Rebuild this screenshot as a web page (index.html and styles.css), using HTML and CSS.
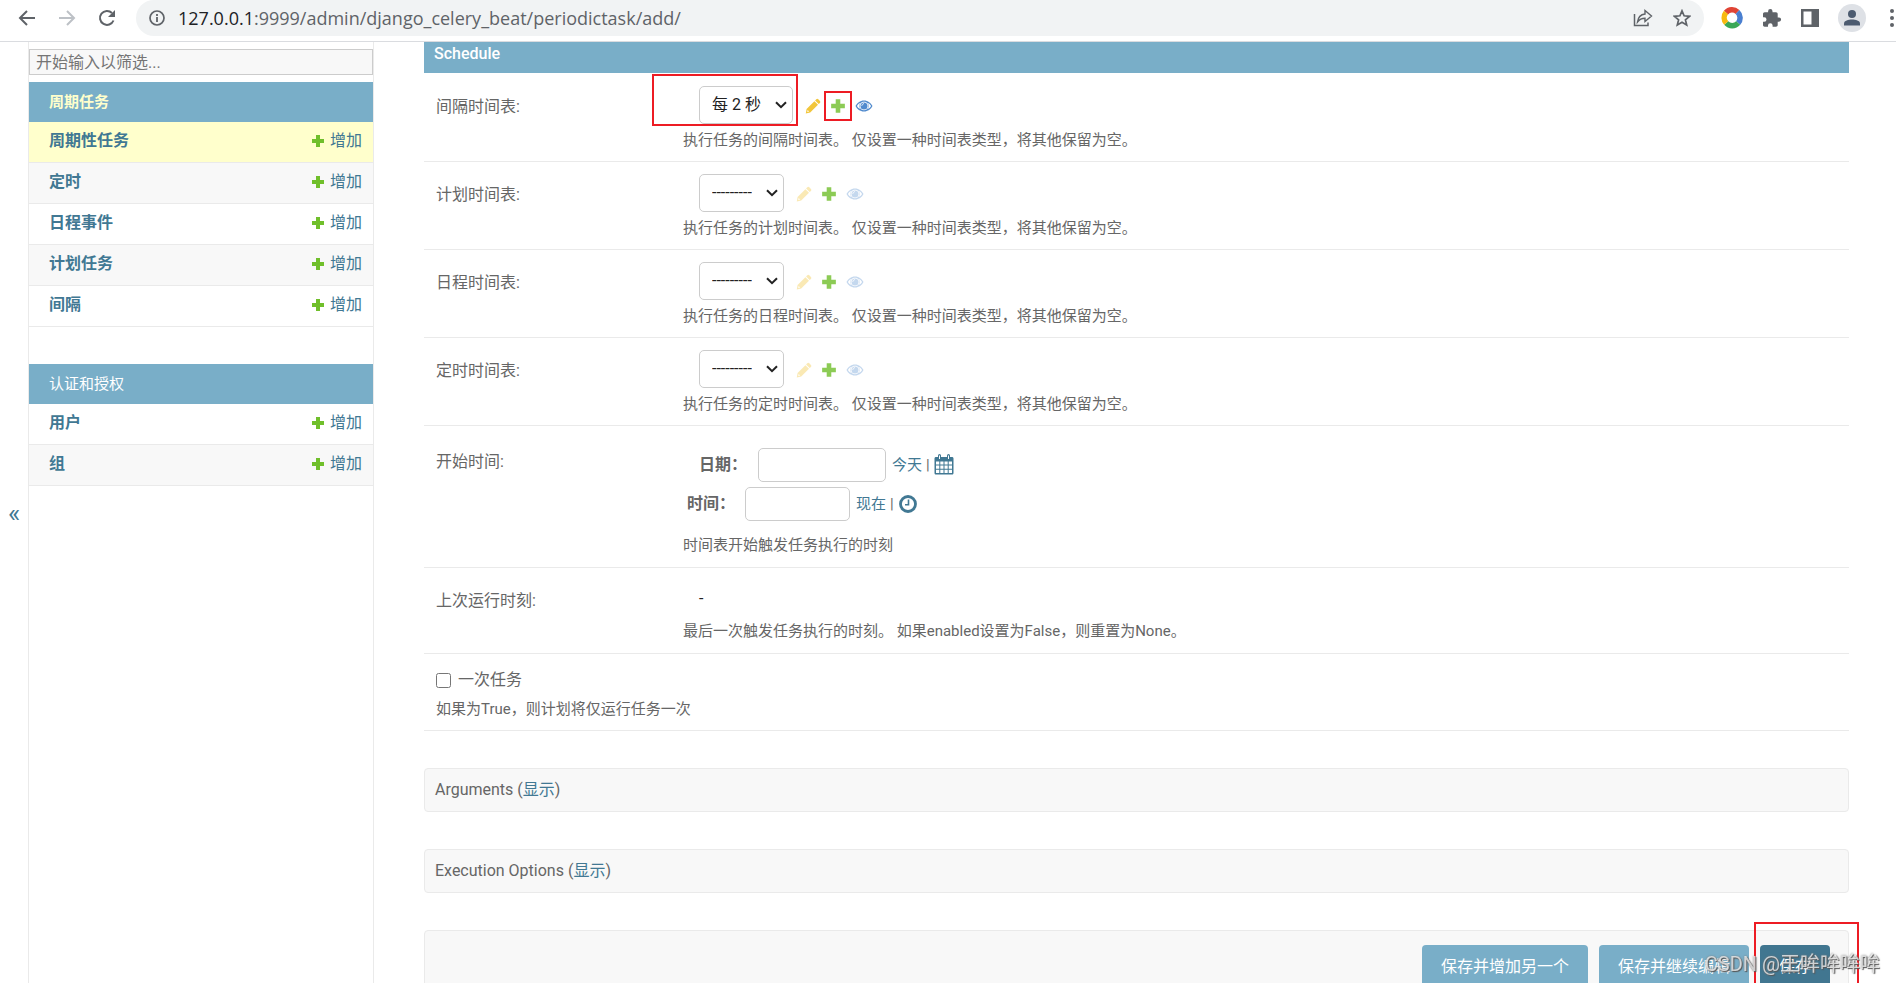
FILE: index.html
```html
<!DOCTYPE html>
<html lang="zh-CN">
<head>
<meta charset="utf-8">
<title>增加 周期性任务</title>
<link rel="stylesheet" href="styles.css">
</head>
<body>
<svg class="defs" aria-hidden="true">
  <symbol id="plus" viewBox="0 0 14 14"><path d="M5 1h4v4h4v4H9v4H5V9H1V5h4z" fill="currentColor"/></symbol>
  <symbol id="pencil" viewBox="0 0 16 16"><path d="M11.300 1.300a1.400 1.400 0 0 1 2 0l1.600 1.600a1.400 1.400 0 0 1 0 2l-1.200 1.200-3.600-3.600zM9.400 3.200l3.600 3.600-7.800 7.800L.8 15.400l.8-4.400zM2.600 11.900l-.4 2 2-.4z" fill="currentColor" fill-rule="evenodd"/></symbol>
  <symbol id="eye" viewBox="0 0 18 12"><path d="M9 .5C5 .5 2 3 .5 6 2 9 5 11.500 9 11.500S16 9 17.500 6C16 3 13 .5 9 .5zM9 1.700c.7 0 1.200.2 1.800.4A4.300 4.300 0 0 1 11.600 9.600c-.8.500-1.700.7-2.600.7s-1.800-.2-2.600-.7A4.300 4.300 0 0 1 7.200 2.100C7.800 1.900 8.300 1.700 9 1.700zM5 2.900A6 6 0 0 0 5 9C3.600 8.300 2.600 7.300 1.900 6 2.600 4.700 3.600 3.600 5 2.900zM13 2.900c1.400.7 2.400 1.800 3.100 3.100-.7 1.300-1.700 2.300-3.100 3A6 6 0 0 0 13 2.900z" fill="currentColor" fill-rule="evenodd"/><path d="M9 2.500A3.500 3.500 0 1 0 9 9.500 3.500 3.500 0 0 0 9 2.500z" fill="currentColor"/><path d="M6.800 5.800C6.900 4.600 7.800 3.700 9 3.600" fill="none" stroke="#fff" stroke-width=".9"/></symbol>
  <symbol id="chevron" viewBox="0 0 12 8"><path d="M1 1.200l5 5 5-5" fill="none" stroke="#222" stroke-width="2"/></symbol>
</svg>

<header class="toolbar">
  <button class="tool nav-btn" aria-label="后退"><svg width="18" height="18" viewBox="0 0 18 18"><path d="M17 9H2M9 2L2 9l7 7" fill="none" stroke="#5f6368" stroke-width="2"/></svg></button>
  <button class="tool nav-btn" aria-label="前进"><svg width="18" height="18" viewBox="0 0 18 18"><path d="M1 9h15M9 2l7 7-7 7" fill="none" stroke="#bdc1c6" stroke-width="2"/></svg></button>
  <button class="tool nav-btn" aria-label="刷新"><svg width="18" height="18" viewBox="0 0 18 18"><path d="M15.500 11.500A7 7 0 1 1 14 4" fill="none" stroke="#5f6368" stroke-width="2"/><path d="M17 1v7h-7z" fill="#5f6368"/></svg></button>
  <div class="address">
    <svg width="16" height="16" viewBox="0 0 16 16"><circle cx="8" cy="8" r="7" fill="none" stroke="#5f6368" stroke-width="1.700"/><path d="M8 7v5M8 4v2" stroke="#5f6368" stroke-width="1.800"/></svg>
    <span class="url"><b>127.0.0.1</b>:9999/admin/django_celery_beat/periodictask/add/</span>
    <button class="tool" aria-label="分享"><svg width="20" height="18" viewBox="0 0 20 18"><path d="M1.500 5v11.500h13.500v-3" fill="none" stroke="#5f6368" stroke-width="1.500"/><path d="M12 1.500l6.500 5.500-6.500 5.500V9.300c-3 0-5.500 1-7.500 3.700.5-4 3-7.500 7.500-8z" fill="none" stroke="#5f6368" stroke-width="1.400"/></svg></button>
    <button class="tool" aria-label="收藏"><svg width="18" height="18" viewBox="0 0 18 18"><path d="M9 1.800l2.100 5 5.400.5-4.100 3.500 1.300 5.300L9 13.300l-4.700 2.800 1.300-5.300-4.100-3.500 5.400-.5z" fill="none" stroke="#5f6368" stroke-width="1.700"/></svg></button>
  </div>
  <div class="extensions">
    <button class="tool" aria-label="扩展"><svg width="22" height="22" viewBox="0 0 22 22"><g fill="none" stroke-width="5.500"><path d="M5 5.600A8 8 0 0 1 16.500 5" stroke="#e04435"/><path d="M16.500 5a8 8 0 0 1 .7 11" stroke="#4a7fd0"/><path d="M17.200 16a8 8 0 0 1-12 0" stroke="#3aa757"/><path d="M5.200 16A8 8 0 0 1 5 5.600" stroke="#f7b90f"/></g></svg></button>
    <button class="tool" aria-label="扩展程序"><svg width="20" height="20" viewBox="0 0 20 20"><path d="M17 9.500h-1.300V6c0-1-.7-1.700-1.700-1.700h-3.500V3.200a2.200 2.200 0 0 0-4.400 0v1.100H2.700C1.700 4.300 1 5 1 6v3.200h1.200a2.300 2.300 0 0 1 0 4.600H1V17c0 1 .7 1.700 1.700 1.700H6v-1.200a2.300 2.300 0 0 1 4.600 0v1.200H14c1 0 1.700-.7 1.700-1.700v-3.300H17a2.100 2.100 0 0 0 0-4.200z" fill="#5f6368"/></svg></button>
    <button class="tool" aria-label="侧边栏"><svg width="18" height="18" viewBox="0 0 18 18"><path d="M0 0h18v18H0zM2.500 2.500v13h8v-13z" fill="#5f6368" fill-rule="evenodd"/></svg></button>
    <button class="tool avatar" aria-label="用户"><svg width="28" height="28" viewBox="0 0 28 28"><circle cx="14" cy="14" r="14" fill="#dee1e6"/><circle cx="14" cy="10" r="4" fill="#4c5b70"/><path d="M6 21.500v-2c0-3 4.500-4 8-4s8 1 8 4v2z" fill="#4c5b70"/></svg></button>
    <button class="tool" aria-label="菜单"><svg width="4" height="18" viewBox="0 0 4 18"><g fill="#5f6368"><circle cx="2" cy="2" r="2"/><circle cx="2" cy="9" r="2"/><circle cx="2" cy="16" r="2"/></g></svg></button>
  </div>
</header>

<div class="page">
  <button class="toggle" aria-label="切换侧边栏">«</button>
  <nav class="sidebar">
    <input class="filter" type="search" placeholder="开始输入以筛选..." aria-label="筛选">
    <table class="module">
      <caption><a class="current-app" href="#">周期任务</a></caption>
      <tr class="current"><th><a href="#">周期性任务</a></th><td><a href="#"><svg class="plus"><use href="#plus"/></svg>增加</a></td></tr>
      <tr><th><a href="#">定时</a></th><td><a href="#"><svg class="plus"><use href="#plus"/></svg>增加</a></td></tr>
      <tr><th><a href="#">日程事件</a></th><td><a href="#"><svg class="plus"><use href="#plus"/></svg>增加</a></td></tr>
      <tr><th><a href="#">计划任务</a></th><td><a href="#"><svg class="plus"><use href="#plus"/></svg>增加</a></td></tr>
      <tr><th><a href="#">间隔</a></th><td><a href="#"><svg class="plus"><use href="#plus"/></svg>增加</a></td></tr>
    </table>
    <table class="module">
      <caption><a href="#">认证和授权</a></caption>
      <tr><th><a href="#">用户</a></th><td><a href="#"><svg class="plus"><use href="#plus"/></svg>增加</a></td></tr>
      <tr><th><a href="#">组</a></th><td><a href="#"><svg class="plus"><use href="#plus"/></svg>增加</a></td></tr>
    </table>
  </nav>

  <main class="content">
    <form>
      <section class="fieldset">
        <h2>Schedule</h2>
        <div class="row">
          <label class="name" for="interval">间隔时间表:</label>
          <div class="field">
            <div class="related">
              <span class="select-wrap marked"><select id="interval"><option>每 2 秒</option></select><svg class="chevron"><use href="#chevron"/></svg></span>
              <a href="#" class="change" aria-label="修改"><svg><use href="#pencil"/></svg></a>
              <a href="#" class="add marked" aria-label="增加"><svg><use href="#plus"/></svg></a>
              <a href="#" class="view" aria-label="查看"><svg><use href="#eye"/></svg></a>
            </div>
            <p class="help">执行任务的间隔时间表。 仅设置一种时间表类型，将其他保留为空。</p>
          </div>
        </div>
        <div class="row">
          <label class="name" for="crontab">计划时间表:</label>
          <div class="field">
            <div class="related empty">
              <span class="select-wrap"><select id="crontab"><option>---------</option></select><svg class="chevron"><use href="#chevron"/></svg></span>
              <a class="change" href="#" aria-label="修改"><svg><use href="#pencil"/></svg></a>
              <a href="#" class="add" aria-label="增加"><svg><use href="#plus"/></svg></a>
              <a class="view" href="#" aria-label="查看"><svg><use href="#eye"/></svg></a>
            </div>
            <p class="help">执行任务的计划时间表。 仅设置一种时间表类型，将其他保留为空。</p>
          </div>
        </div>
        <div class="row">
          <label class="name" for="solar">日程时间表:</label>
          <div class="field">
            <div class="related empty">
              <span class="select-wrap"><select id="solar"><option>---------</option></select><svg class="chevron"><use href="#chevron"/></svg></span>
              <a class="change" href="#" aria-label="修改"><svg><use href="#pencil"/></svg></a>
              <a href="#" class="add" aria-label="增加"><svg><use href="#plus"/></svg></a>
              <a class="view" href="#" aria-label="查看"><svg><use href="#eye"/></svg></a>
            </div>
            <p class="help">执行任务的日程时间表。 仅设置一种时间表类型，将其他保留为空。</p>
          </div>
        </div>
        <div class="row">
          <label class="name" for="clocked">定时时间表:</label>
          <div class="field">
            <div class="related empty">
              <span class="select-wrap"><select id="clocked"><option>---------</option></select><svg class="chevron"><use href="#chevron"/></svg></span>
              <a class="change" href="#" aria-label="修改"><svg><use href="#pencil"/></svg></a>
              <a href="#" class="add" aria-label="增加"><svg><use href="#plus"/></svg></a>
              <a class="view" href="#" aria-label="查看"><svg><use href="#eye"/></svg></a>
            </div>
            <p class="help">执行任务的定时时间表。 仅设置一种时间表类型，将其他保留为空。</p>
          </div>
        </div>
        <div class="row start-row">
          <span class="name">开始时间:</span>
          <div class="field">
            <div class="stamp date">
              <label for="date">日期：</label><input type="text" id="date">
              <span class="shortcuts"><a href="#">今天</a>|<a href="#" aria-label="选择日期"><svg width="20" height="21" viewBox="0 0 20 21"><path d="M.5 4.500c0-1 .7-1.500 1.500-1.500h2V1.500a1.500 1.500 0 0 1 3 0V3h6V1.500a1.500 1.500 0 0 1 3 0V3h2c.8 0 1.500.5 1.500 1.500V19c0 1-.7 1.500-1.500 1.500H2c-.8 0-1.500-.5-1.500-1.500z" fill="#417893"/><path d="M2 7.500h3.300v3H2zM6.300 7.500h3.200v3H6.300zM10.500 7.500h3.200v3h-3.200zM14.700 7.500H18v3h-3.300zM2 11.500h3.300v3.300H2zM6.300 11.500h3.200v3.300H6.300zM10.500 11.500h3.200v3.300h-3.200zM14.700 11.500H18v3.300h-3.300zM2 15.800h3.300V19H2zM6.300 15.800h3.200V19H6.300zM10.500 15.800h3.200V19h-3.200zM14.700 15.800H18V19h-3.300zM5 1.500h1V5H5zM14 1.500h1V5h-1z" fill="#fff"/></svg></a></span>
            </div>
            <div class="stamp time">
              <label for="time">时间：</label><input type="text" id="time">
              <span class="shortcuts"><a href="#">现在</a>|<a href="#" aria-label="选择时间"><svg width="20" height="20" viewBox="0 0 20 20"><circle cx="10" cy="10" r="7.500" fill="none" stroke="#417893" stroke-width="2.800"/><path d="M10.500 5.500v5.300H7" fill="none" stroke="#417893" stroke-width="1.600"/></svg></a></span>
            </div>
            <p class="help">时间表开始触发任务执行的时刻</p>
          </div>
        </div>
        <div class="row last-row">
          <span class="name">上次运行时刻:</span>
          <div class="field">
            <div class="readonly">-</div>
            <p class="help">最后一次触发任务执行的时刻。 如果enabled设置为False，则重置为None。</p>
          </div>
        </div>
        <div class="row once-row">
          <div class="checkline"><input type="checkbox" id="once"><label for="once">一次任务</label></div>
          <p class="help">如果为True，则计划将仅运行任务一次</p>
        </div>
      </section>
      <h2 class="collapsed">Arguments (<a href="#">显示</a>)</h2>
      <h2 class="collapsed">Execution Options (<a href="#">显示</a>)</h2>
      <div class="submit-row">
        <button type="button">保存并增加另一个</button>
        <button type="button">保存并继续编辑</button>
        <span class="save-wrap"><button type="button" class="default">保存</button></span>
      </div>
    </form>
  </main>
</div>
<div class="watermark">CSDN @王哞哞哞哞</div>
</body>
</html>
```

FILE: styles.css
```css
* { box-sizing: border-box; }
body {
  margin: 0;
  height: 100vh;
  overflow: hidden;
  display: flex;
  flex-direction: column;
  background: #fff;
  color: #666;
  font: 16px/20px Roboto, "Noto Sans CJK SC", sans-serif;
}
a { color: #417893; text-decoration: none; }
svg { display: block; }
.defs { position: absolute; width: 0; height: 0; }
button, input, select { font: inherit; }

.toolbar {
  display: flex;
  flex: none;
  align-items: center;
  height: 42px;
  padding: 0 2px 5px 18px;
  border-bottom: 1px solid #dadce0;
}
.tool { padding: 0; border: 0; background: none; }
.nav-btn { margin-right: 22px; }
.nav-btn:nth-child(3) { margin-right: 20px; }
.address {
  display: flex;
  flex: 1;
  align-items: center;
  gap: 20px;
  height: 36px;
  padding: 0 13px;
  border-radius: 18px;
  background: #f1f3f4;
}
.url {
  flex: 1;
  margin-left: -7px;
  color: #5f6368;
  font: 18px/24px "Open Sans", sans-serif;
}
.url b { color: #202124; font-weight: 400; }
.extensions { display: flex; align-items: center; gap: 19px; margin-left: 17px; }
.extensions .avatar { margin-right: 5px; }

.page { display: flex; flex: 1; min-height: 0; }
.toggle {
  width: 28px;
  padding: 0;
  border: 0;
  background: none;
  color: #417893;
  font-size: 26px;
}
.sidebar {
  width: 346px;
  flex: none;
  padding-top: 7px;
  border: solid #eaeaea;
  border-width: 0 1px;
}
.filter {
  display: block;
  width: 100%;
  height: 26px;
  margin-bottom: 7px;
  padding: 0 6px;
  border: 1px solid #ccc;
  background: #f8f8f8;
  color: #666;
}
.filter::placeholder { color: #757575; }
.module { width: 100%; margin-bottom: 37px; border-spacing: 0; }
.module caption {
  height: 40px;
  padding-left: 20px;
  background: #79aec8;
  font-size: 15px;
  line-height: 40px;
  text-align: left;
}
.module caption a { color: #fff; }
.module caption .current-app { color: #ffc; font-weight: 700; }
.module tr:nth-child(even) { background: #f8f8f8; }
.module .current { background: #ffc; }
.module th, .module td {
  height: 41px;
  padding: 0 11px 2px 20px;
  border-bottom: 1px solid #eaeaea;
}
.module th { text-align: left; font-weight: 700; }
.module td a { display: flex; justify-content: flex-end; align-items: center; gap: 5px; }
.plus { width: 14px; height: 14px; color: #70bf2b; }

.content { flex: 1; min-width: 0; padding: 0 47px 0 50px; }
.fieldset { margin-bottom: 37px; }
.fieldset h2 {
  margin: 0;
  height: 31px;
  padding: 2px 10px;
  background: #79aec8;
  color: #fff;
  font-size: 16px;
  font-weight: 500;
  line-height: 20px;
}
.row {
  display: flex;
  padding: 12px 12px 11px;
  border-bottom: 1px solid #eaeaea;
}
h2 + .row { padding-top: 13px; }
.name { width: 247px; flex: none; padding-top: 13px; line-height: 16px; }
.help { margin: 6px 0 0; font-size: 15px; line-height: 20px; }
.related { display: flex; align-items: center; padding-left: 16px; height: 38px; }
.related a { margin-top: 2px; }
.select-wrap { position: relative; margin-right: 12px; }
.related select {
  appearance: none;
  display: block;
  height: 38px;
  padding: 6px 31px 6px 12px;
  border: 1px solid #ccc;
  border-radius: 5px;
  background: #fff;
  color: #222;
}
.chevron {
  position: absolute;
  top: 15px;
  right: 6px;
  width: 12px;
  height: 8px;
  pointer-events: none;
}
.change { color: #efb80b; opacity: .8; }
.change svg { width: 16px; height: 16px; }
.related .add { position: relative; margin-right: 9px; margin-left: 9px; color: #70bf2b; }
.add svg { width: 16px; height: 16px; opacity: .8; }
.view { color: #3f7fc9; opacity: .9; }
.view svg { width: 18px; height: 12px; }
.empty .change, .empty .view { opacity: .3; }
.marked::after, .save-wrap::after { content: ""; position: absolute; border: 2px solid #ed1c24; pointer-events: none; }
.select-wrap.marked::after { inset: -12px -5px -2px -47px; }
.add.marked::after { inset: -7px -6px; }

.start-row { padding: 21px 12px 12px; }
.start-row .name { padding-top: 7px; }
.stamp { display: flex; align-items: center; height: 35px; margin-bottom: 4px; }
.stamp label { font-weight: 700; }
.stamp input {
  height: 34px;
  margin-right: 6px;
  border: 1px solid #ccc;
  border-radius: 5px;
}
.date { padding-left: 16px; }
.date label { width: 59px; }
.date input { width: 128px; }
.time { padding-left: 4px; }
.time label { width: 58px; }
.time input { width: 105px; }
.shortcuts { display: flex; align-items: center; gap: 4px; font-size: 15px; }
.start-row .help { margin-top: 14px; }
.last-row { padding-top: 18px; padding-bottom: 12px; }
.last-row .name { padding-top: 7px; }
.readonly { height: 27px; padding: 3px 0 0 16px; color: #222; }
.last-row .help { margin-top: 8px; }
.once-row { display: block; padding-top: 14px; padding-bottom: 11px; }
.checkline { display: flex; align-items: center; gap: 7px; height: 24px; }
.checkline input { width: 15px; height: 15px; margin: 0; }
.once-row .help { margin-top: 7px; }

.collapsed {
  height: 44px;
  margin: 0 0 37px;
  padding: 11px 10px;
  border: 1px solid #eaeaea;
  border-radius: 4px;
  background: #f8f8f8;
  font-size: 16px;
  font-weight: 400;
  line-height: 20px;
}
.submit-row {
  display: flex;
  justify-content: flex-end;
  gap: 11px;
  height: 76px;
  padding: 14px 18px;
  border: 1px solid #eaeaea;
  border-radius: 4px;
  background: #f8f8f8;
}
.submit-row button {
  height: 44px;
  padding: 0 19px;
  border: 0;
  border-radius: 4px;
  background: #79aec8;
  color: #fff;
}
.submit-row .default { background: #417690; }
.save-wrap { position: relative; }
.save-wrap::after { inset: -23px -29px -30px -6px; }
.watermark {
  position: fixed;
  right: 16px;
  bottom: 7px;
  color: rgba(255, 255, 255, .7);
  font-size: 20px;
  line-height: 24px;
  text-shadow: 1px 1px 1px #555, 0 0 2px #777;
}
```
